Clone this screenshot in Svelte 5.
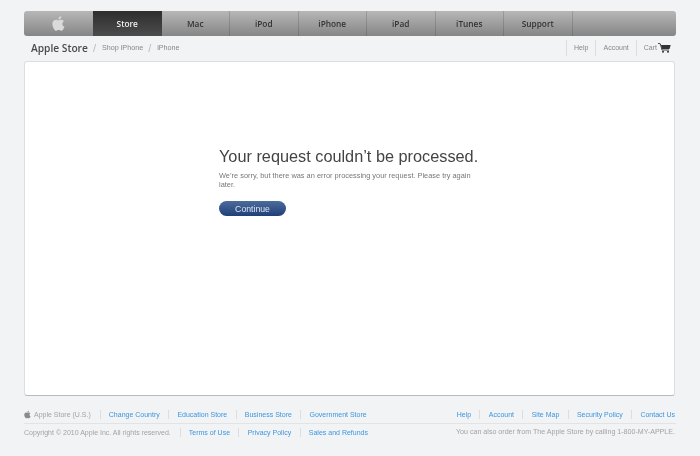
<script>
  const tabs = ["Store", "Mac", "iPod", "iPhone", "iPad", "iTunes", "Support"];
  const footerTop = ["Change Country", "Education Store", "Business Store", "Government Store"];
  const footerRight = ["Help", "Account", "Site Map", "Security Policy", "Contact Us"];
  const legal = ["Terms of Use", "Privacy Policy", "Sales and Refunds"];
  const apple = "M11.6 8.5c0-1.7 1.4-2.5 1.5-2.6-.8-1.2-2.1-1.4-2.5-1.4-1.1-.1-2.1.6-2.6.6-.6 0-1.4-.6-2.3-.6C4.500 4.500 3.400 5.200 2.800 6.200 1.600 8.300 2.500 11.400 3.700 13.100c.6.8 1.300 1.800 2.200 1.700.9 0 1.200-.6 2.300-.6s1.400.6 2.300.6c1 0 1.600-.8 2.100-1.700.7-1 1-1.900 1-2-.1 0-1.900-.7-2-2.600zM9.900 3.400c.5-.6.800-1.400.7-2.200-.7 0-1.500.5-2 1-.4.5-.8 1.300-.7 2.100.8.1 1.500-.4 2-.9z";
</script>

<div class="page">
  <nav class="globalnav">
    <div class="tab logo">
      <svg width="17" height="17" viewBox="0 0 16 16" aria-hidden="true"><path d={apple} fill="#dadada" /></svg>
    </div>
    {#each tabs as t, i}
      <div class="tab" class:active={i === 0}>{t}</div>
    {/each}
    <div class="tab rest"></div>
  </nav>

  <div class="subnav">
    <div class="crumbs">
      <span class="brand">Apple Store</span>
      <span class="sep">/</span>
      <span>Shop iPhone</span>
      <span class="sep">/</span>
      <span>iPhone</span>
    </div>
    <div class="utils">
      <span class="util">Help</span>
      <span class="util">Account</span>
      <span class="util cart">
        Cart
        <svg width="13" height="10" viewBox="0 0 13 10" aria-hidden="true">
          <path d="M0 .4l2.300.4L4 7h7" fill="none" stroke="#333" stroke-width=".9" />
          <path d="M2.900 2h9.800l-1.200 4H4z" fill="#333" />
          <circle cx="5" cy="8.800" r="1" fill="#333" />
          <circle cx="10" cy="8.800" r="1" fill="#333" />
        </svg>
      </span>
    </div>
  </div>

  <main class="box">
    <div class="message">
      <h1>Your request couldn’t be processed.</h1>
      <p>We’re sorry, but there was an error processing your request. Please try again later.</p>
      <button type="button">Continue</button>
    </div>
  </main>

  <footer>
    <div class="frow top">
      <div class="group">
        <span class="muted store">
          <svg width="9" height="9" viewBox="0 0 16 16" aria-hidden="true"><path d={apple} fill="#8a8a8a" /></svg>
          Apple Store (U.S.)
        </span>
        {#each footerTop as l}<a href="#top">{l}</a>{/each}
      </div>
      <div class="group right">
        {#each footerRight as l}<a href="#top">{l}</a>{/each}
      </div>
    </div>
    <div class="frow">
      <div class="group">
        <span class="muted">Copyright © 2010 Apple Inc. All rights reserved.</span>
        {#each legal as l}<a href="#top">{l}</a>{/each}
      </div>
      <span class="muted phone">You can also order from The Apple Store by calling 1-800-MY-APPLE.</span>
    </div>
  </footer>
</div>

<style>
  :global(body) {
    margin: 0;
    background: #f2f3f5;
  }

  .page {
    box-sizing: border-box;
    width: 700px;
    height: 456px;
    padding: 11px 24px 0;
    overflow: hidden;
    background: #f2f3f5;
    font-family: "Liberation Sans", Arial, sans-serif;
    filter: blur(0.4px);
  }

  .globalnav {
    display: flex;
    height: 25px;
    border-radius: 3px;
    overflow: hidden;
    background: linear-gradient(#b7b7b7, #858585);
  }

  .tab {
    box-sizing: border-box;
    flex: 0 0 68.500px;
    display: flex;
    align-items: center;
    justify-content: center;
    border-right: 1px solid rgba(0, 0, 0, 0.14);
    font: 600 8.300px "Open Sans", sans-serif;
    color: #333;
  }

  .tab.logo {
    flex-basis: 69px;
    border-right: 0;
  }

  .tab.active {
    background: linear-gradient(#2e2e2e, #4c4c4c);
    color: #eee;
    border-right: 0;
  }

  .tab.rest {
    flex: 1;
    border-right: 0;
  }

  .subnav {
    display: flex;
    justify-content: space-between;
    align-items: center;
    box-sizing: border-box;
    height: 25px;
    padding: 0 5px 2px 0;
  }

  .crumbs {
    display: flex;
    align-items: center;
    gap: 5px;
    padding-left: 7px;
    font-size: 7.200px;
    color: #888;
  }

  .brand {
    font: 600 10.200px "Open Sans", sans-serif;
    color: #4a4a4a;
  }

  .sep {
    margin-right: 1px;
    font-size: 11px;
    color: #bbb;
  }

  .utils {
    display: flex;
    align-items: center;
    font-size: 7px;
    color: #888;
  }

  .util {
    display: flex;
    align-items: center;
    height: 16px;
    padding: 0 7px;
    border-left: 1px solid #dcdde0;
  }

  .util.cart {
    gap: 1px;
    padding-right: 0;
  }

  .box {
    box-sizing: border-box;
    width: 651px;
    height: 335px;
    background: #fff;
    border: 1px solid #dddee0;
    border-bottom: 1px solid #b9babc;
    border-radius: 3px;
  }

  .message {
    width: 256px;
    margin: 85px 0 0 194px;
  }

  h1 {
    margin: 0;
    font-size: 16.300px;
    line-height: 19px;
    font-weight: 400;
    color: #444;
    white-space: nowrap;
  }

  p {
    margin: 5px 0 0;
    font-size: 7.400px;
    line-height: 9px;
    color: #777;
  }

  button {
    display: block;
    width: 67px;
    height: 15px;
    margin-top: 12px;
    padding: 0;
    border: 0;
    border-radius: 8px;
    background: linear-gradient(#4d6c9c, #1f3f78);
    color: #dfe6f0;
    font: 8.700px "Liberation Sans", Arial, sans-serif;
  }

  footer {
    font-size: 7px;
    color: #a3a3a3;
  }

  .frow {
    display: flex;
    justify-content: space-between;
    align-items: center;
    height: 17px;
  }

  .frow.top {
    height: 18px;
    margin-top: 9px;
    border-bottom: 1px solid #e2e3e5;
  }

  .group {
    display: flex;
    align-items: center;
  }

  .group.right {
    padding-right: 1px;
  }

  .group a {
    padding: 0 8.300px;
    border-left: 1px solid #dcdde0;
    color: #3c96dc;
    text-decoration: none;
    line-height: 9px;
  }

  .group a:last-child {
    padding-right: 0;
  }

  .group.right a:first-child {
    border-left: 0;
  }

  .muted {
    padding-right: 9px;
    line-height: 9px;
  }

  .muted + a {
    padding-left: 8px;
  }

  .phone {
    padding-right: 1px;
    font-size: 7.100px;
  }

  .store {
    display: flex;
    align-items: center;
    gap: 2px;
  }

  .store svg {
    margin-left: -1px;
  }
</style>
